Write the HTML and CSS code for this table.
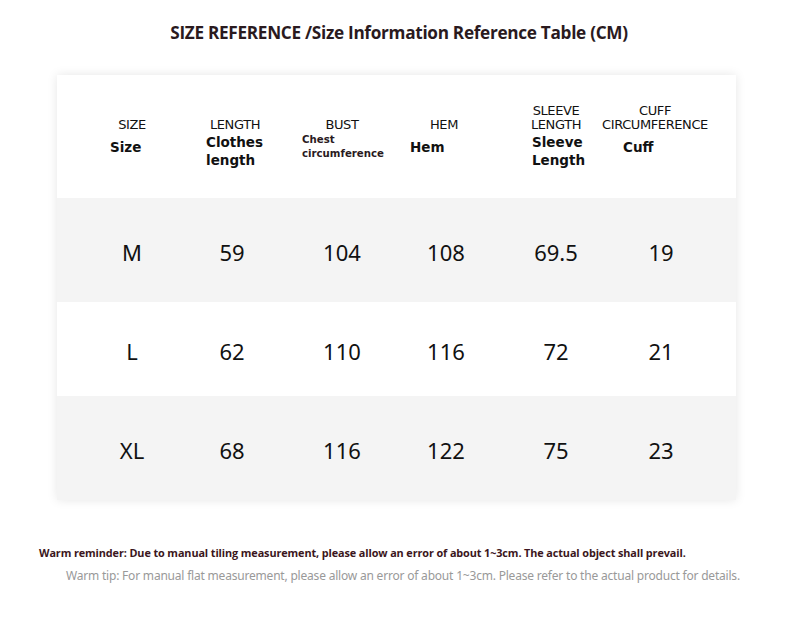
FILE: index.html
```html
<!DOCTYPE html>
<html>
<head>
<meta charset="utf-8">
<link rel="stylesheet" href="styles.css">
</head>
<body>
<div class="page">
  <h1 class="title">SIZE REFERENCE /Size Information Reference Table (CM)</h1>
  <div class="card">
    <div class="row head">
      <div class="cell"><div class="en">SIZE</div><div class="sub s-size">Size</div></div>
      <div class="cell"><div class="en e-len">LENGTH</div><div class="sub s-len">Clothes<br>length</div></div>
      <div class="cell"><div class="en">BUST</div><div class="sub small s-bust">Chest<br>circumference</div></div>
      <div class="cell"><div class="en e-hem">HEM</div><div class="sub s-hem">Hem</div></div>
      <div class="cell"><div class="en">SLEEVE<br>LENGTH</div><div class="sub s-sl">Sleeve<br>Length</div></div>
      <div class="cell"><div class="en e-cuff">CUFF<br>CIRCUMFERENCE</div><div class="sub s-cuff">Cuff</div></div>
    </div>
    <div class="row data gray tall">
      <div class="cell">M</div><div class="cell">59</div><div class="cell">104</div><div class="cell">108</div><div class="cell">69.5</div><div class="cell">19</div>
    </div>
    <div class="row data short">
      <div class="cell">L</div><div class="cell">62</div><div class="cell">110</div><div class="cell">116</div><div class="cell">72</div><div class="cell">21</div>
    </div>
    <div class="row data gray tall">
      <div class="cell">XL</div><div class="cell">68</div><div class="cell">116</div><div class="cell">122</div><div class="cell">75</div><div class="cell">23</div>
    </div>
  </div>
  <p class="warn">Warm reminder: Due to manual tiling measurement, please allow an error of about 1~3cm. The actual object shall prevail.</p>
  <p class="tip">Warm tip: For manual flat measurement, please allow an error of about 1~3cm. Please refer to the actual product for details.</p>
</div>
</body>
</html>
```
FILE: styles.css
```css
html, body {
  margin: 0;
  padding: 0;
  background: #ffffff;
}
.page {
  width: 790px;
  height: 627px;
  overflow: hidden;
  font-family: "Noto Sans", sans-serif;
}
.title {
  margin: 0;
  padding-top: 21px;
  height: 75px;
  box-sizing: border-box;
  text-align: center;
  font-family: "Open Sans", sans-serif;
  font-weight: 700;
  font-size: 17.2px;
  letter-spacing: -0.3px;
  color: #2a1a1e;
  line-height: 24px;
  padding-left: 8px;
}
.card {
  margin: 0 0 0 57px;
  width: 679px;
  background: #fff;
  box-shadow: 0 0 10px rgba(0,0,0,0.10);
}
.row {
  display: grid;
  grid-template-columns: 110px 90px 130px 78px 142px 68px;
  padding-left: 20px;
}
.gray { background: #f4f4f4; }
.head { height: 123px; }
.tall { height: 104px; }
.short { height: 94px; }
.data .cell {
  display: flex;
  align-items: center;
  justify-content: center;
  padding-top: 3px;
  font-size: 22px;
  color: #111;
  font-family: "Noto Sans", sans-serif;
}
.head .cell {
  display: flex;
  flex-direction: column;
  align-items: center;
}
.head .en {
  height: 57px;
  display: flex;
  align-items: flex-end;
  justify-content: center;
  text-align: center;
  font-family: "DejaVu Sans", sans-serif;
  font-size: 13px;
  line-height: 14px;
  color: #111;
  letter-spacing: -0.4px;
  white-space: nowrap;
}
.e-len { margin-left: 6px; }
.e-hem { margin-right: 4px; }
.e-cuff { margin-right: 12px; }
.head .sub {
  font-family: "DejaVu Sans", sans-serif;
  font-weight: 700;
  font-size: 13.5px;
  line-height: 18px;
  color: #111;
  text-align: left;
  align-self: flex-start;
  white-space: nowrap;
}
.head .sub.small {
  font-size: 10.2px;
  line-height: 14px;
  color: #2a1a1e;
}
.s-size { margin: 6px 0 0 33px; }
.s-len { margin: 1px 0 0 19px; }
.s-bust { margin: 1px 0 0 25px; }
.s-hem { margin: 6px 0 0 3px; }
.s-sl { margin: 1px 0 0 47px; }
.s-cuff { margin: 6px 0 0 -4px; }
.warn {
  margin: 46px 0 0 39px;
  font-family: "Open Sans", sans-serif;
  font-weight: 700;
  font-size: 10.85px;
  letter-spacing: -0.1px;
  color: #3b1620;
  line-height: 14px;
}
.tip {
  margin: 8px 0 0 66px;
  font-family: "Noto Sans", sans-serif;
  font-size: 12px;
  color: #999;
  line-height: 16px;
  letter-spacing: -0.2px;
}
```
